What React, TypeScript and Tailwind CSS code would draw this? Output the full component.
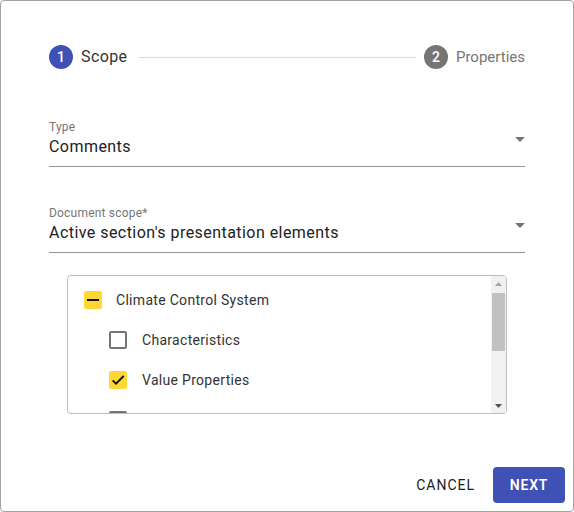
import React from "react";

type Check = "on" | "off" | "mixed";

type Node = {
  label: string;
  depth: number;
  state: Check;
};

const nodes: Node[] = [
  { label: "Climate Control System", depth: 0, state: "mixed" },
  { label: "Characteristics", depth: 1, state: "off" },
  { label: "Value Properties", depth: 1, state: "on" },
  { label: "", depth: 1, state: "off" },
];

function Box({ state }: { state: Check }) {
  if (state === "off") {
    return <span className="block h-[18px] w-[18px] shrink-0 rounded-[2px] border-2 border-[#757575]" />;
  }
  return (
    <span className="flex h-[18px] w-[18px] shrink-0 items-center justify-center rounded-[2px] bg-[#fdd835]">
      {state === "mixed" ? (
        <span className="block h-[2px] w-[12px] bg-[#111]" />
      ) : (
        <svg width="16" height="16" viewBox="0 0 24 24">
          <path d="M4 12.5l5 5L20.5 6" fill="none" stroke="#111" strokeWidth="2.8" />
        </svg>
      )}
    </span>
  );
}

function Caret() {
  return (
    <svg width="10" height="5" viewBox="0 0 10 5" className="shrink-0">
      <path d="M0 0h10L5 5z" fill="#757575" />
    </svg>
  );
}

function SelectField({ label, value }: { label: string; value: string }) {
  return (
    <div className="border-b border-[#949494]">
      <div className="text-[12px] leading-[16px] tracking-[0.2px] text-[#757575]">{label}</div>
      <div className="flex items-start justify-between pb-[7px]">
        <span className="text-[16px] leading-[24px] tracking-[0.45px] text-[#212121]">{value}</span>
        <span className="mt-[2px]">
          <Caret />
        </span>
      </div>
    </div>
  );
}

export default function App() {
  return (
    <div
      className="flex h-[512px] w-[574px] flex-col overflow-hidden rounded-[4px] border border-[#a3a3a3] bg-white"
      style={{ fontFamily: "Roboto, 'Liberation Sans', sans-serif" }}
    >
      <div className="flex-1 px-[48px] pt-[44px]">
        <div className="flex items-center">
          <span className="flex h-[24px] w-[24px] items-center justify-center rounded-full bg-[#3f51b5] text-[14px] font-medium text-white">
            1
          </span>
          <span className="ml-[8px] text-[16px] tracking-[0.4px] text-[#333]">Scope</span>
          <span className="ml-[12px] mr-[8px] h-px flex-1 bg-[#dcdcdc]" />
          <span className="flex h-[24px] w-[24px] items-center justify-center rounded-full bg-[#757575] text-[14px] font-medium text-white">
            2
          </span>
          <span className="ml-[8px] text-[15px] text-[#757575]">Properties</span>
        </div>

        <div className="mt-[50px]">
          <SelectField label="Type" value="Comments" />
        </div>
        <div className="mt-[38px]">
          <SelectField label="Document scope*" value="Active section's presentation elements" />
        </div>

        <div className="mx-[18px] mt-[22px] flex h-[139px] overflow-hidden rounded-[4px] border border-[#bdbdbd]">
          <div className="flex-1 overflow-hidden pt-[4px]">
            {nodes.map((n, i) => (
              <div
                key={i}
                className={`flex h-[40px] items-center ${n.depth ? "pl-[41px] gap-[15px]" : "pl-[16px] gap-[14px]"}`}
              >
                <Box state={n.state} />
                {n.label && <span className="text-[14px] tracking-[0.3px] text-[#333]">{n.label}</span>}
              </div>
            ))}
          </div>
          <div className="flex w-[15px] flex-col bg-[#f1f1f1]">
            <div className="flex h-[15px] items-center justify-center">
              <svg width="7" height="4" viewBox="0 0 7 4">
                <path d="M0 4h7L3.5 0z" fill="#a3a3a3" />
              </svg>
            </div>
            <div className="mx-[1px] mt-[2px] h-[58px] bg-[#c1c1c1]" />
            <div className="flex-1" />
            <div className="flex h-[15px] items-center justify-center">
              <svg width="7" height="4" viewBox="0 0 7 4">
                <path d="M0 0h7L3.5 4z" fill="#505050" />
              </svg>
            </div>
          </div>
        </div>
      </div>

      <div className="flex items-center justify-end gap-[10px] p-[8px]">
        <button className="h-[36px] px-[8px] text-[14px] tracking-[1px] text-[#212121]">
          CANCEL
        </button>
        <button className="h-[36px] w-[72px] rounded-[4px] bg-[#3f51b5] text-[14px] font-semibold tracking-[0.8px] text-white">
          NEXT
        </button>
      </div>
    </div>
  );
}
